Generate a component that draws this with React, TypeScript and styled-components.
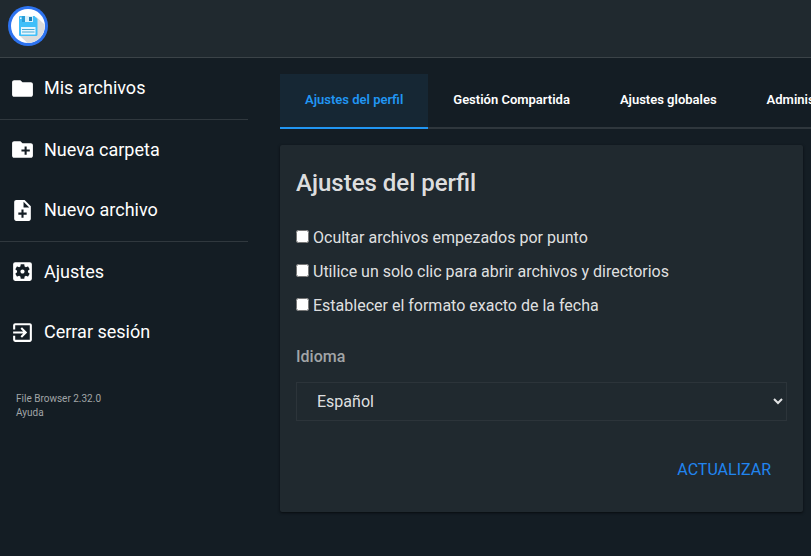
import React from "react";
import styled, { createGlobalStyle } from "styled-components";
import {
  MdCreateNewFolder,
  MdExitToApp,
  MdFolder,
  MdNoteAdd,
  MdSettingsApplications,
} from "react-icons/md";

const GlobalStyle = createGlobalStyle`
  *, *::before, *::after { box-sizing: border-box; }
  body {
    margin: 0;
    background: #141d24;
    color: rgba(255, 255, 255, 0.87);
    font-family: Roboto, sans-serif;
    font-size: 16px;
    overflow-x: hidden;
  }
`;

const Page = styled.div`
  min-height: 100vh;
`;

const Header = styled.header`
  display: flex;
  align-items: center;
  height: 58px;
  padding: 0 8px 6px;
  background: #20292f;
  border-bottom: 1px solid rgba(255, 255, 255, 0.12);
`;

const Body = styled.div`
  display: grid;
  grid-template-columns: 248px minmax(0, 1fr);
  column-gap: 32px;
`;

const Group = styled.div<{ $rows: number }>`
  display: grid;
  grid-auto-rows: 1fr;
  height: ${(p) => (p.$rows === 1 ? 61 : 121)}px;

  & + & {
    box-sizing: content-box;
    border-top: 1px solid rgba(255, 255, 255, 0.12);
  }
`;

const NavButton = styled.button`
  display: flex;
  align-items: center;
  gap: 9px;
  width: 100%;
  padding: 0 10px 1px;
  border: 0;
  background: transparent;
  color: #fff;
  font: 400 18px/24px Roboto, sans-serif;
  text-align: left;
  cursor: pointer;

  svg {
    flex: none;
    width: 25px;
    height: 25px;
  }
`;

const Credits = styled.footer`
  display: flex;
  flex-direction: column;
  align-items: flex-start;
  padding: 29px 16px;
  color: #a1a5a7;
  font-size: 10px;
  line-height: 14px;

  a {
    color: inherit;
    text-decoration: none;
  }
`;

const Main = styled.main`
  min-width: 0;
  padding: 16px 0;
`;

const Tabs = styled.nav`
  display: flex;
  overflow: hidden;
`;

const Tab = styled.a<{ $active?: boolean }>`
  flex: 1 0 auto;
  padding: 15px 25px 17px;
  border-bottom: 2px solid ${(p) => (p.$active ? "#2196f3" : "#2f373d")};
  background: ${(p) => (p.$active ? "#162734" : "transparent")};
  color: ${(p) => (p.$active ? "#2196f3" : "#fff")};
  font-size: 13px;
  font-weight: 600;
  line-height: 21px;
  text-align: center;
  text-decoration: none;
  white-space: nowrap;
`;

const Card = styled.form`
  margin: 16px 8px 0 0;
  padding: 0 16px;
  border-radius: 2px;
  background: #20292f;
  box-shadow: 0 1px 3px rgba(0, 0, 0, 0.35), 0 1px 2px rgba(0, 0, 0, 0.3);
`;

const Title = styled.h2`
  margin: 0;
  padding: 24px 0 23px;
  font-size: 24px;
  font-weight: 500;
  line-height: 28px;
`;

const CheckRow = styled.label`
  display: flex;
  align-items: center;
  gap: 4px;
  height: 34px;

  input {
    width: 13px;
    height: 13px;
    margin: 0 0 2px;
  }
`;

const FieldLabel = styled.label`
  display: block;
  margin: 25px 0 15px;
  color: #a2a5a7;
  font-weight: 500;
  line-height: 20px;
`;

const Select = styled.select`
  display: block;
  width: 100%;
  height: 39px;
  padding: 0 0 0 16px;
  border: 1px solid #2c343a;
  border-radius: 0;
  background: #20292f;
  color: rgba(255, 255, 255, 0.87);
  font: 400 16px Roboto, sans-serif;
`;

const Actions = styled.div`
  display: flex;
  justify-content: flex-end;
  padding: 30px 0 24px;
`;

const Submit = styled.button`
  height: 37px;
  padding: 0 16px;
  border: 0;
  background: transparent;
  color: #2185ef;
  font: 400 16px Roboto, sans-serif;
  text-transform: uppercase;
  cursor: pointer;
`;

function Logo() {
  return (
    <svg width="40" height="40" viewBox="0 0 40 40" role="img" aria-label="File Browser">
      <circle cx="20" cy="20" r="20" fill="#2d73f0" />
      <circle cx="20" cy="20" r="17" fill="#fff" />
      <path d="M28.5 11 36.6 18.5A17 17 0 0 1 19.5 37L12 30Z" fill="#dcdcdc" />
      <path d="M12 10h14.5l3 3v15.500a1.500 1.500 0 0 1-1.500 1.500H12a1 1 0 0 1-1-1V11a1 1 0 0 1 1-1z" fill="#40bff9" />
      <path d="M14 10h3v6h-3z" fill="#2a9fd8" />
      <path d="M17 10h8v6h-8z" fill="#d9f1fc" />
      <path d="M21 11h3v4h-3z" fill="#1f7fb5" />
      <path d="M13 21h14.500v7.500H13z" fill="#e6f6fd" />
      <path d="M14 23.500h12.500M14 26h12.500" stroke="#4aa8d3" strokeWidth="1" />
      <path d="M12 11.500h1.500v1.500H12z" fill="#eaf9ff" />
    </svg>
  );
}

const groups = [
  [{ label: "Mis archivos", Icon: MdFolder }],
  [
    { label: "Nueva carpeta", Icon: MdCreateNewFolder },
    { label: "Nuevo archivo", Icon: MdNoteAdd },
  ],
  [
    { label: "Ajustes", Icon: MdSettingsApplications },
    { label: "Cerrar sesión", Icon: MdExitToApp },
  ],
];

const tabs = [
  "Ajustes del perfil",
  "Gestión Compartida",
  "Ajustes globales",
  "Administración de usuarios",
];

const options = [
  "Ocultar archivos empezados por punto",
  "Utilice un solo clic para abrir archivos y directorios",
  "Establecer el formato exacto de la fecha",
];

export default function App() {
  return (
    <Page>
      <GlobalStyle />
      <Header>
        <Logo />
      </Header>
      <Body>
        <nav>
          {groups.map((items) => (
            <Group key={items[0].label} $rows={items.length}>
              {items.map(({ label, Icon }) => (
                <NavButton key={label} type="button">
                  <Icon aria-hidden="true" />
                  {label}
                </NavButton>
              ))}
            </Group>
          ))}
          <Credits>
            <span>File Browser 2.32.0</span>
            <a href="#ayuda">Ayuda</a>
          </Credits>
        </nav>
        <Main>
          <Tabs>
            {tabs.map((label, i) => (
              <Tab key={label} href="#ajustes" $active={i === 0}>
                {label}
              </Tab>
            ))}
          </Tabs>
          <Card onSubmit={(e) => e.preventDefault()}>
            <Title>Ajustes del perfil</Title>
            {options.map((label) => (
              <CheckRow key={label}>
                <input type="checkbox" />
                {label}
              </CheckRow>
            ))}
            <FieldLabel htmlFor="idioma">Idioma</FieldLabel>
            <Select id="idioma" defaultValue="es">
              <option value="es">Español</option>
            </Select>
            <Actions>
              <Submit type="submit">Actualizar</Submit>
            </Actions>
          </Card>
        </Main>
      </Body>
    </Page>
  );
}
